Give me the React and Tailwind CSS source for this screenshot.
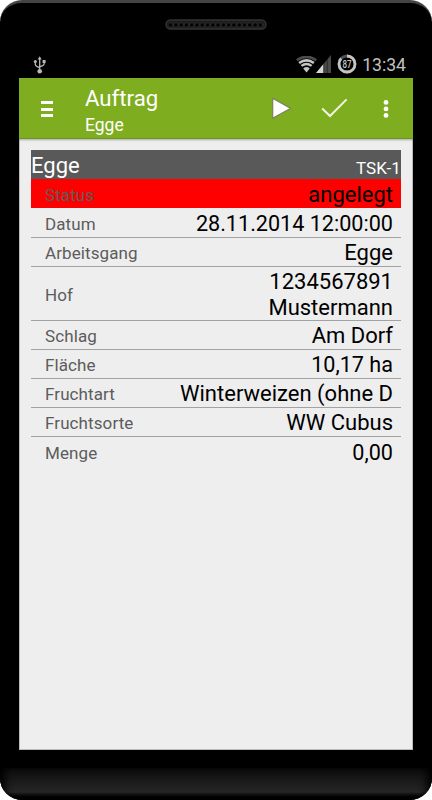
import clsx from "clsx";

const rows = [
  { label: "Status", value: "angelegt", alert: true },
  { label: "Datum", value: "28.11.2014 12:00:00", numeric: true },
  { label: "Arbeitsgang", value: "Egge" },
  { label: "Hof", value: "1234567891\nMustermann", tall: true },
  { label: "Schlag", value: "Am Dorf" },
  { label: "Fläche", value: "10,17 ha", numeric: true },
  { label: "Fruchtart", value: "Winterweizen (ohne D" },
  { label: "Fruchtsorte", value: "WW Cubus" },
  { label: "Menge", value: "0,00", numeric: true, last: true },
];

function Speaker() {
  return (
    <svg width="102" height="12" viewBox="0 0 102 12">
      <defs>
        <pattern id="holes" width="5.28" height="12" patternUnits="userSpaceOnUse" x="3">
          <circle cx="2.6" cy="6" r="2.3" fill="#030303" stroke="#333" strokeWidth="0.7" />
        </pattern>
      </defs>
      <rect x="1" y="1" width="100" height="9" rx="4.5" fill="#1c1c1c" stroke="#333" strokeWidth="1.4" />
      <rect x="4" y="3" width="95" height="6" fill="url(#holes)" />
    </svg>
  );
}

function UsbIcon() {
  return (
    <svg width="14" height="19" viewBox="0 0 14 19" fill="none" stroke="#b8b8b8" strokeWidth="1.3">
      <path d="M6.7 15V3M2.3 6v2.3q0 1.5 2 2.4l2.4 1.1M11.2 6v1.6q0 1.5-2 2.2l-2.5 1" />
      <path d="M6.7 0.2L8.7 3.6H4.7z" fill="#b8b8b8" stroke="none" />
      <circle cx="2.3" cy="5.6" r="1.5" fill="#b8b8b8" stroke="none" />
      <path d="M9.6 3.9h3v3h-3z" fill="#b8b8b8" stroke="none" />
      <circle cx="6.7" cy="15.2" r="2.3" fill="#b8b8b8" stroke="none" />
    </svg>
  );
}

function WifiIcon() {
  return (
    <svg width="21" height="17" viewBox="0 0 21 17" fill="none">
      <path d="M0.8 4.2Q10.5 -2.6 20.2 4.2" stroke="#4c4c4c" strokeWidth="2.6" />
      <path d="M3.1 7Q10.5 1.6 17.9 7" stroke="#c4c4c4" strokeWidth="2.6" />
      <path d="M5.4 9.9Q10.5 6 15.6 9.9" stroke="#c4c4c4" strokeWidth="2.4" />
      <path d="M7.2 12.4Q10.5 9.8 13.8 12.4L10.5 16.4z" fill="#c4c4c4" />
    </svg>
  );
}

function SignalIcon() {
  return (
    <svg width="16" height="18" viewBox="0 0 16 18">
      <path d="M0 18L15 0V18z" fill="#4a4a4a" />
      <path d="M0 18L7.5 9V18z" fill="#d6d6d6" />
      <path d="M7.8 8v10M11.2 4v14" stroke="#1c1c1c" strokeWidth="0.7" />
    </svg>
  );
}

function BatteryIcon() {
  return (
    <svg width="20" height="20" viewBox="0 0 20 20">
      <circle cx="10" cy="10" r="8" fill="none" stroke="#505050" strokeWidth="2.8" />
      <circle
        cx="10"
        cy="10"
        r="8"
        fill="none"
        stroke="#c4c4c4"
        strokeWidth="2.8"
        pathLength="100"
        strokeDasharray="87 13"
        transform="rotate(-90 10 10)"
      />
      <text
        x="10"
        y="13.5"
        textAnchor="middle"
        textLength="9"
        lengthAdjust="spacingAndGlyphs"
        className="fill-[#c4c4c4] font-['Roboto',sans-serif] text-[10px] font-medium"
      >
        87
      </text>
    </svg>
  );
}

function StatusBar() {
  return (
    <div className="flex h-[26px] items-start justify-between pr-[7px] pl-[14px] pt-[2px]">
      <div className="pt-[2px]">
        <UsbIcon />
      </div>
      <div className="flex items-start">
        <div className="pt-[2px]">
          <WifiIcon />
        </div>
        <div className="-ml-px pt-px">
          <SignalIcon />
        </div>
        <div className="ml-[5px]">
          <BatteryIcon />
        </div>
        <span className="ml-[5px] pt-px text-[17.6px] leading-[21px] text-[#c0c0c0]">13:34</span>
      </div>
    </div>
  );
}

function ActionBar() {
  return (
    <header className="relative z-10 flex h-[61px] items-start border-b border-[#6a9a18] bg-[#7eae20] text-white shadow-[0_1px_2px_rgba(0,0,0,0.3)]">
      <div className="mt-[23px] ml-[22px] flex w-3 flex-col gap-[3.6px]">
        <span className="h-[3px] bg-white" />
        <span className="h-[3px] bg-white" />
        <span className="h-[3px] bg-white" />
      </div>
      <div className="mt-[7px] ml-[32px] flex-1">
        <h1 className="text-[22.2px] leading-[27px]">Auftrag</h1>
        <h2 className="pt-px text-[17.5px] leading-[25px]">Egge</h2>
      </div>
      <svg className="mt-[18px]" width="22" height="24" viewBox="0 0 22 24">
        <path d="M1.6 2.2V22.4L19.8 12.4z" fill="#fff" stroke="#7d8a58" strokeWidth="1.4" strokeLinejoin="round" />
      </svg>
      <svg className="mt-[20px] ml-[28px]" width="27" height="20" viewBox="0 0 27 20" fill="none">
        <path d="M1.2 10.5L9 18L25.6 1.4" stroke="#eff5e2" strokeWidth="2" />
      </svg>
      <svg className="mt-[21px] mr-[24px] ml-[35px]" width="6" height="20" viewBox="0 0 6 20" fill="#fff">
        <circle cx="3" cy="3.4" r="2.4" />
        <circle cx="3" cy="9.9" r="2.4" />
        <circle cx="3" cy="16.4" r="2.4" />
      </svg>
    </header>
  );
}

function Row({ label, value, alert, tall, numeric, last }) {
  return (
    <div
      className={clsx(
        "flex items-center justify-between pr-[8px] pl-[14px]",
        alert && "h-[30px] border-b border-[#eee] bg-[#ff0000]",
        !alert && (tall ? "h-[54px]" : "h-[29px]"),
        !alert && !last && "border-b border-[#a2a2a2]"
      )}
    >
      <span className="pt-[2px] text-[17px] leading-[26px] tracking-[0.1px] text-[#5c5c5c]">{label}</span>
      <span
        className={clsx(
          "pt-[2px] text-right leading-[26px] whitespace-pre text-black",
          numeric ? "text-[21.6px]" : "text-[22px]"
        )}
      >
        {value}
      </span>
    </div>
  );
}

export default function App() {
  return (
    <div className="h-[800px] w-[432px] bg-white font-['Roboto',sans-serif]">
      <div className="flex h-full flex-col overflow-hidden rounded-[22px] border-t-[3px] border-[#444] bg-black">
        <div className="flex h-[49px] justify-center pt-[16px]">
          <Speaker />
        </div>
        <div className="ml-[19px] flex h-[698px] w-[394px] flex-col">
          <StatusBar />
          <ActionBar />
          <main className="flex-1 border-x border-b border-[#bbb] bg-[#eee] px-[11px] pt-[11px]">
            <div className="flex h-[29px] items-center justify-between bg-[#595959] text-white">
              <span className="pt-[3px] text-[22px] leading-[28px]">Egge</span>
              <span className="pt-[7px] text-[17px] leading-[22px] tracking-[0.1px]">TSK-1</span>
            </div>
            {rows.map((row) => (
              <Row key={row.label} {...row} />
            ))}
          </main>
        </div>
        <div className="mt-auto h-[32px] bg-linear-to-b from-[#0d0d0d] via-[#262626] via-75% to-black shadow-[inset_8px_0_8px_-3px_#000,inset_-8px_0_8px_-3px_#000]" />
      </div>
    </div>
  );
}
